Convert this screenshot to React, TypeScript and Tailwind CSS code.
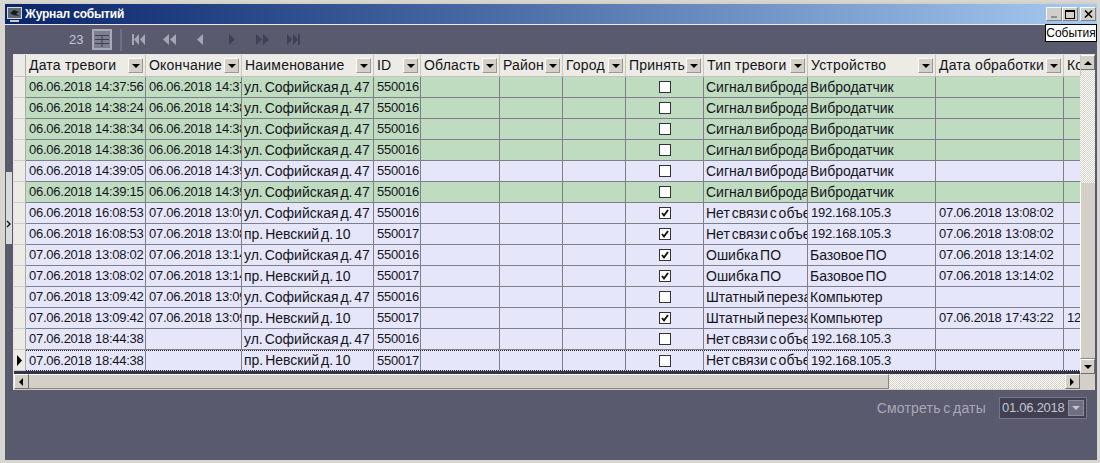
const cols = [
  { name: 'Дата тревоги', w: 120 },
  { name: 'Окончание', w: 96 },
  { name: 'Наименование', w: 132 },
  { name: 'ID', w: 47 },
  { name: 'Область', w: 79 },
  { name: 'Район', w: 63 },
  { name: 'Город', w: 63 },
  { name: 'Принять', w: 78 },
  { name: 'Тип тревоги', w: 104 },
  { name: 'Устройство', w: 128 },
  { name: 'Дата обработки', w: 128 },
  { name: 'Ко', w: 17 },
];

const SOF = 'ул. Софийская д. 47';
const NEV = 'пр. Невский д. 10';
const VIB = 'Сигнал вибродатчика';
const NOLINK = 'Нет связи с объектом';
const RESTART = 'Штатный перезапуск';

type Row = {
  start: string;
  end: string;
  name: string;
  id: string;
  ok: boolean;
  type: string;
  device: string;
  done: string;
  green?: boolean;
  extra?: string;
};

const rows: Row[] = [
  { start: '06.06.2018 14:37:56', end: '06.06.2018 14:37:56', name: SOF, id: '550016', ok: false, type: VIB, device: 'Вибродатчик', done: '', green: true },
  { start: '06.06.2018 14:38:24', end: '06.06.2018 14:38:24', name: SOF, id: '550016', ok: false, type: VIB, device: 'Вибродатчик', done: '', green: true },
  { start: '06.06.2018 14:38:34', end: '06.06.2018 14:38:34', name: SOF, id: '550016', ok: false, type: VIB, device: 'Вибродатчик', done: '', green: true },
  { start: '06.06.2018 14:38:36', end: '06.06.2018 14:38:36', name: SOF, id: '550016', ok: false, type: VIB, device: 'Вибродатчик', done: '', green: true },
  { start: '06.06.2018 14:39:05', end: '06.06.2018 14:39:05', name: SOF, id: '550016', ok: false, type: VIB, device: 'Вибродатчик', done: '' },
  { start: '06.06.2018 14:39:15', end: '06.06.2018 14:39:15', name: SOF, id: '550016', ok: false, type: VIB, device: 'Вибродатчик', done: '', green: true },
  { start: '06.06.2018 16:08:53', end: '07.06.2018 13:08:02', name: SOF, id: '550016', ok: true, type: NOLINK, device: '192.168.105.3', done: '07.06.2018 13:08:02' },
  { start: '06.06.2018 16:08:53', end: '07.06.2018 13:08:02', name: NEV, id: '550017', ok: true, type: NOLINK, device: '192.168.105.3', done: '07.06.2018 13:08:02' },
  { start: '07.06.2018 13:08:02', end: '07.06.2018 13:14:02', name: SOF, id: '550016', ok: true, type: 'Ошибка ПО', device: 'Базовое ПО', done: '07.06.2018 13:14:02' },
  { start: '07.06.2018 13:08:02', end: '07.06.2018 13:14:02', name: NEV, id: '550017', ok: true, type: 'Ошибка ПО', device: 'Базовое ПО', done: '07.06.2018 13:14:02' },
  { start: '07.06.2018 13:09:42', end: '07.06.2018 13:09:42', name: SOF, id: '550016', ok: false, type: RESTART, device: 'Компьютер', done: '' },
  { start: '07.06.2018 13:09:42', end: '07.06.2018 13:09:42', name: NEV, id: '550017', ok: true, type: RESTART, device: 'Компьютер', done: '07.06.2018 17:43:22', extra: '12' },
  { start: '07.06.2018 18:44:38', end: '', name: SOF, id: '550016', ok: false, type: NOLINK, device: '192.168.105.3', done: '' },
  { start: '07.06.2018 18:44:38', end: '', name: NEV, id: '550017', ok: false, type: NOLINK, device: '192.168.105.3', done: '' },
];

function Triangle({ dir, className }: { dir: 'l' | 'r' | 'u' | 'd'; className?: string }) {
  const pts = { l: '5,0 5,8 1,4', r: '1,0 1,8 5,4', u: '0,6 8,6 4,2', d: '0,2 8,2 4,6' }[dir];
  return (
    <svg width="8" height="8" viewBox="0 0 8 8" className={className} fill="currentColor">
      <polygon points={pts} />
    </svg>
  );
}

function NavIcon({ kind }: { kind: 'first' | 'prev2' | 'prev' | 'next' | 'next2' | 'last' }) {
  const color = kind === 'first' || kind === 'prev2' || kind === 'prev' ? '#a4a6b4' : '#3e4056';
  const shapes: Record<string, string[]> = {
    first: ['7,1 7,12 2,6.5', '13,1 13,12 8,6.5'],
    prev2: ['6,1 6,12 0,6.5', '13,1 13,12 7,6.5'],
    prev: ['9,1 9,12 3,6.5'],
    next: ['4,1 4,12 10,6.5'],
    next2: ['0,1 0,12 6,6.5', '7,1 7,12 13,6.5'],
    last: ['0,1 0,12 5,6.5', '6,1 6,12 11,6.5'],
  };
  return (
    <svg width="15" height="13" viewBox="0 0 15 13" fill={color}>
      {kind === 'first' && <rect x="0" y="1" width="2" height="11" />}
      {kind === 'last' && <rect x="11" y="1" width="2" height="11" />}
      {shapes[kind].map((p) => (
        <polygon key={p} points={p} />
      ))}
    </svg>
  );
}

function Check({ on }: { on: boolean }) {
  return (
    <div className="w-[12px] h-[12px] bg-white border border-[#333] flex items-center justify-center">
      {on && (
        <svg width="10" height="10" viewBox="0 0 10 10" fill="none" stroke="#111" strokeWidth="1.9">
          <path d="M2 5 L4 7.5 L8 2" />
        </svg>
      )}
    </div>
  );
}

function Cell({ w, children, last, num }: { w: number; children?: React.ReactNode; last?: boolean; num?: boolean }) {
  return (
    <div
      style={{ width: w }}
      className={`shrink-0 h-full overflow-hidden whitespace-nowrap flex items-center ${num ? 'pl-[3px] text-[13px] tracking-[-0.25px]' : 'pl-[2px] text-[14px] [word-spacing:-2px]'} ${last ? '' : 'border-r border-[#7f7f8c]'}`}
    >
      {children}
    </div>
  );
}

function ScrollBtn({ dir }: { dir: 'l' | 'r' | 'u' | 'd' }) {
  return (
    <div className="w-[15px] h-[15px] shrink-0 bg-[#d4d0c8] border-t border-l border-white border-r border-b border-r-[#6f6f6f] border-b-[#6f6f6f] flex items-center justify-center text-black">
      <Triangle dir={dir} />
    </div>
  );
}

const dither = 'bg-[repeating-conic-gradient(#d4d0c8_0%_25%,#ffffff_0%_50%)] bg-[length:2px_2px]';

export default function App() {
  return (
    <div className="w-[1100px] h-[463px] overflow-hidden bg-[#d4d0c8] border-t-[2px] border-l-[5px] border-r-[3px] border-b-[3px] border-[#d8d6d0] flex flex-col font-['Liberation_Sans',Arial,sans-serif] relative">
      {/* title bar */}
      <div className="h-[20px] mt-[2px] shrink-0 flex items-center bg-gradient-to-r from-[#0a246a] to-[#a6caf0] pl-[1px] pr-[1px]">
        <svg width="17" height="17" viewBox="0 0 17 17" className="shrink-0">
          <rect x="1.5" y="1.5" width="14" height="11" fill="#5e6a70" stroke="#d8d8d8" />
          <path d="M4 7 L8 4 L13 6 L10 7.5 L13 10 L7 9 Z" fill="#141c22" />
          <rect x="4" y="14" width="9" height="2" fill="#c8c8c8" />
        </svg>
        <span className="ml-[2px] text-[12px] tracking-[-0.2px] font-bold text-white leading-none">Журнал событий</span>
        <div className="ml-auto flex">
          <div className="w-[16px] h-[14px] bg-[#d4d0c8] border border-[#808080] border-t-white border-l-white flex items-end justify-center pb-[2px] opacity-90">
            <div className="w-[6px] h-[2px] bg-[#8a8a80]" />
          </div>
          <div className="w-[16px] h-[14px] bg-[#d4d0c8] border border-[#808080] border-t-white border-l-white flex items-center justify-center">
            <div className="w-[10px] h-[9px] border border-black border-t-2" />
          </div>
          <div className="w-[16px] h-[14px] ml-[2px] bg-[#d4d0c8] border border-[#808080] border-t-white border-l-white flex items-center justify-center text-black">
            <svg width="9" height="8" viewBox="0 0 9 8" stroke="currentColor" strokeWidth="1.5">
              <path d="M1 0.5 L8 7.5 M8 0.5 L1 7.5" />
            </svg>
          </div>
        </div>
      </div>

      {/* tooltip */}
      <div className="absolute right-[0px] top-[22px] h-[18px] w-[52px] bg-white border border-black text-[12px] leading-[16px] text-black text-center z-10 whitespace-nowrap overflow-hidden">
        События
      </div>

      {/* body */}
      <div className="flex-1 flex flex-col bg-[#5a5a6e] min-h-0 border-t border-[#e8e8e8]">
        {/* toolbar */}
        <div className="h-[29px] shrink-0 flex items-center pl-[64px]">
          <span className="text-[13px] text-[#c4c5d0] w-[16px]">23</span>
          <svg width="20" height="21" viewBox="0 0 20 21" className="ml-[7px]">
            <rect x="1" y="1" width="18" height="19" fill="#7d7e90" stroke="#a9aab8" strokeWidth="2" />
            <path d="M3 6.5 H17 M3 10.5 H17 M3 14.5 H17 M10 6.5 V18" stroke="#3f3f52" strokeWidth="1" fill="none" />
          </svg>
          <div className="ml-[8px] w-[2px] h-[22px] bg-[#6f7082]" />
          <div className="ml-[10px] flex gap-[16px]">
            <NavIcon kind="first" />
            <NavIcon kind="prev2" />
            <NavIcon kind="prev" />
            <NavIcon kind="next" />
            <NavIcon kind="next2" />
            <NavIcon kind="last" />
          </div>
        </div>

        {/* splitter + grid */}
        <div className="flex items-start">
          <div className="w-[8px] h-[336px] shrink-0 relative">
            <div className="absolute left-[1px] top-[118px] w-[6px] h-[72px] bg-[#d9dbdb]" />
            <svg width="6" height="8" viewBox="0 0 6 8" className="absolute left-[1px] top-[166px]" fill="none" stroke="#111" strokeWidth="1.4">
              <path d="M1 1 L4 4 L1 7" />
            </svg>
          </div>
          <div className="w-[1082px] h-[336px] shrink-0 border-l border-t border-[#e4e4e4] bg-[#d4d0c8] flex text-[#141420]">
            <div className="w-[1066px] shrink-0 flex flex-col">
              {/* header */}
              <div className="h-[22px] flex bg-[#ecebe6] border-b border-[#c4c2ba]">
                <div className="w-[12px] shrink-0 border-r border-[#aaa]" />
                {cols.map((c, i) => (
                  <div
                    key={c.name}
                    style={{ width: c.w }}
                    className="shrink-0 relative overflow-hidden whitespace-nowrap pl-[3px] flex items-center border-r border-[#c8c6be] text-[14px] tracking-[0.2px]"
                  >
                    {c.name}
                    {i !== cols.length - 1 && (
                      <div className="absolute right-[2px] top-[3px] w-[15px] h-[15px] bg-[#d4d0c8] border border-[#999] border-t-white border-l-white flex items-center justify-center text-black">
                        <Triangle dir="d" />
                      </div>
                    )}
                  </div>
                ))}
              </div>
              {/* rows */}
              {rows.map((r, idx) => {
                const current = idx === rows.length - 1;
                return (
                  <div key={idx} className="h-[21px] flex">
                    <div className="w-[12px] shrink-0 bg-[#ecebe6] border-r border-[#aaa] flex items-center justify-center text-black border-b border-b-[#ccc]">
                      {current && (
                        <svg width="7" height="11" viewBox="0 0 7 11" fill="currentColor">
                          <polygon points="1,0 1,11 6,5.5" />
                        </svg>
                      )}
                    </div>
                    <div
                      className={`flex h-full border-b ${r.green ? 'bg-[#c0dcc0]' : 'bg-[#e6e6fa]'} ${current ? 'border-dotted border-t border-[#222]' : 'border-[#7f7f8c]'}`}
                    >
                      <Cell w={120} num>
                        {r.start}
                      </Cell>
                      <Cell w={96} num>
                        {r.end}
                      </Cell>
                      <Cell w={132}>{r.name}</Cell>
                      <Cell w={47} num>
                        {r.id}
                      </Cell>
                      <Cell w={79} />
                      <Cell w={63} />
                      <Cell w={63} />
                      <Cell w={78}>
                        <div className="w-full flex justify-center pr-[2px]">
                          <Check on={r.ok} />
                        </div>
                      </Cell>
                      <Cell w={104}>{r.type}</Cell>
                      <Cell w={128} num={r.device.startsWith('192')}>
                        {r.device}
                      </Cell>
                      <Cell w={128} num>
                        {r.done}
                      </Cell>
                      <Cell w={17} last num>
                        {r.extra}
                      </Cell>
                    </div>
                  </div>
                );
              })}
              <div className="h-[3px] bg-[#34344a]" />
              {/* horizontal scroll */}
              <div className="h-[15px] flex bg-[#d4d0c8]">
                <ScrollBtn dir="l" />
                <div className="w-[860px] h-full bg-[#d4d0c8] border-r border-b border-[#8a8a80] border-t border-t-white" />
                <div className={`flex-1 h-full ${dither}`} />
                <ScrollBtn dir="r" />
              </div>
            </div>
            {/* vertical scroll */}
            <div className="w-[15px] shrink-0 flex flex-col h-[319px]">
              <ScrollBtn dir="u" />
              <div className={`h-[113px] ${dither}`} />
              <div className="flex-1 bg-[#d4d0c8] border-b border-[#8a8a80] border-l border-l-white" />
              <ScrollBtn dir="d" />
            </div>
          </div>
        </div>

        {/* footer */}
        <div className="flex justify-end items-center pr-[10px] mt-[7px]">
          <span className="text-[14px] text-[#a8a9b8] tracking-[0.2px] [word-spacing:-1.5px]">Смотреть с даты</span>
          <div className="ml-[13px] w-[88px] h-[22px] border border-[#74758a] bg-[#404050] flex items-center pl-[2px] pr-[2px]">
            <span className="text-[13px] tracking-[-0.25px] text-[#c4c5d0]">01.06.2018</span>
            <div className="ml-auto w-[16px] h-[16px] bg-[#6e6f80] border border-[#8a8b9c] flex items-center justify-center text-[#c4c5d0]">
              <Triangle dir="d" />
            </div>
          </div>
        </div>
      </div>
    </div>
  );
}
